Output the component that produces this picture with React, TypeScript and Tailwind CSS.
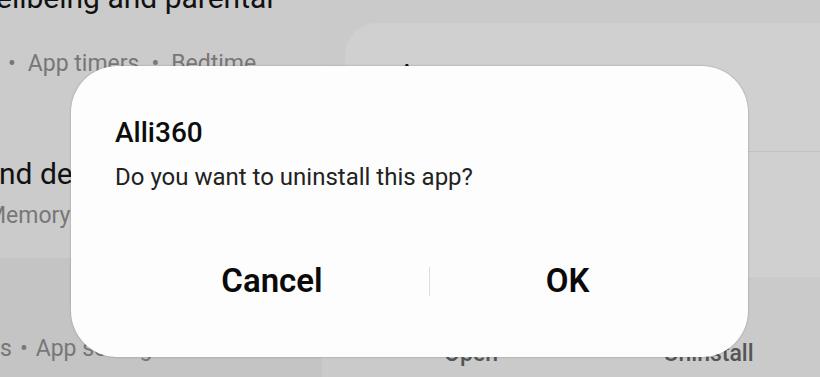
const font = { fontFamily: "Roboto, 'Noto Sans', sans-serif" };

export default function App() {
  return (
    <div
      className="relative w-[820px] h-[377px] overflow-hidden bg-[#cacaca] flex"
      style={font}
    >
      {/* left settings list, dimmed */}
      <div className="w-[322px] shrink-0 flex flex-col overflow-hidden">
        <div className="h-[258px] bg-[#cbcbcb] flex flex-col">
          <div className="-mt-[19px] -ml-[4px] text-[30px] leading-[34px] text-[#111] whitespace-nowrap">
            ellbeing and parental
          </div>
          <div className="mt-[35px] flex items-center gap-[12px] pl-[8px] text-[23px] leading-[28px] text-[#777] whitespace-nowrap">
            <span>•</span>
            <span>App timers</span>
            <span>•</span>
            <span>Bedtime</span>
          </div>
          <div className="mt-[79px] -ml-[1px] text-[30px] leading-[34px] text-[#111] whitespace-nowrap">
            nd device care
          </div>
          <div className="mt-[11px] -ml-[14px] text-[23px] leading-[28px] text-[#777] whitespace-nowrap">
            Memory
          </div>
        </div>
        <div className="flex-1 bg-[#c4c4c4] pt-[77px]">
          <div className="flex items-center gap-[8px] text-[23px] leading-[28px] text-[#777] whitespace-nowrap">
            <span>s</span>
            <span>•</span>
            <span>App settings</span>
          </div>
        </div>
      </div>

      {/* right app info pane, dimmed */}
      <div className="flex-1 flex flex-col pt-[23px]">
        <div className="ml-[23px] h-[254px] bg-[#d0d0d0] rounded-tl-[32px] flex flex-col">
          <div className="pt-[36px] pl-[53px] text-[27px] leading-[32px] text-[#111] whitespace-nowrap">
            App usage
          </div>
          <div className="mt-[60px] ml-[40px] h-px bg-[#c3c3c3]" />
        </div>
        <div className="ml-[23px] flex pt-[63px] text-[23px] leading-[28px] font-medium text-[#555]">
          <div className="w-[252px] text-center">Open</div>
          <div className="flex-1 text-center">Uninstall</div>
        </div>
      </div>

      {/* dialog */}
      <div className="absolute left-[71px] top-[66px] w-[677px] h-[291px] rounded-[46px] bg-[#fdfdfd] shadow-[0_0_2px_rgba(0,0,0,0.3)] flex flex-col">
        <div className="pt-[50px] pl-[44px] text-[28px] leading-[34px] font-medium text-[#0d0d0d]">
          Alli360
        </div>
        <div className="mt-[12px] pl-[44px] text-[24px] leading-[30px] text-[#222]">
          Do you want to uninstall this app?
        </div>
        <div className="mt-[69px] flex items-center h-[40px] pl-[44px]">
          <div className="w-[314px] text-center text-[33px] leading-[40px] font-semibold text-[#0a0a0a]">
            Cancel
          </div>
          <div className="w-px h-[29px] bg-[#dedede]" />
          <div className="w-[275px] text-center text-[33px] leading-[40px] font-semibold text-[#0a0a0a]">
            OK
          </div>
        </div>
      </div>
    </div>
  );
}
